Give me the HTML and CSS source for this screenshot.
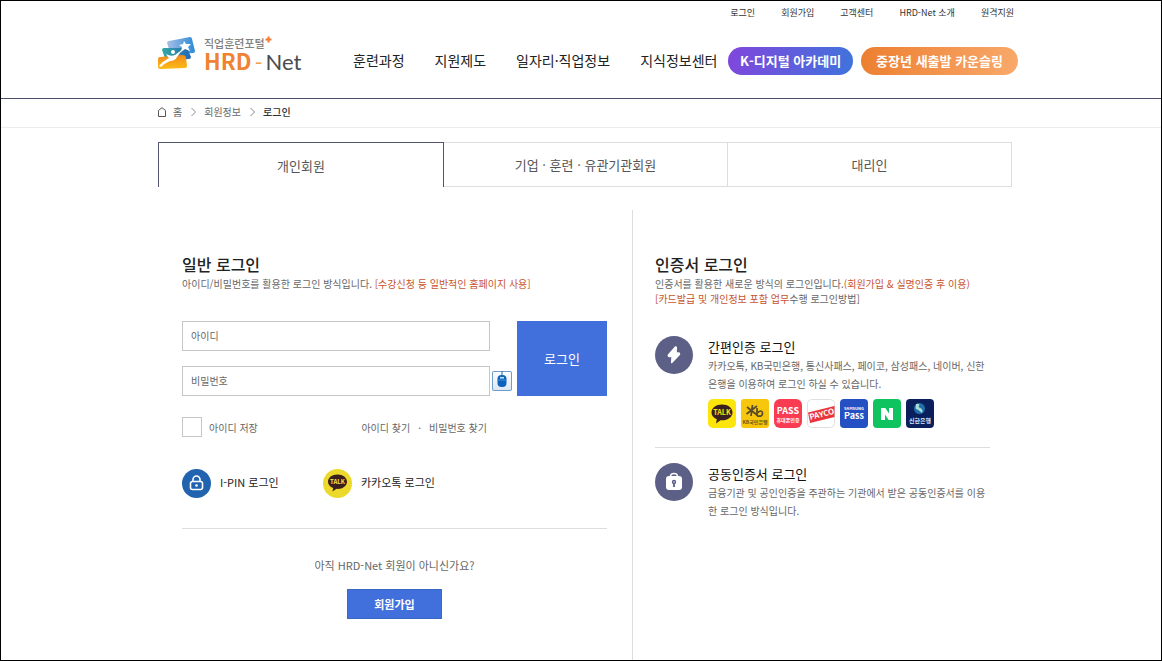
FILE: index.html
```html
<!DOCTYPE html>
<html lang="ko">
<head>
<meta charset="utf-8">
<meta name="viewport" content="width=device-width, initial-scale=1">
<title>로그인 - HRD-Net</title>
<link rel="stylesheet" href="styles.css">
</head>
<body>
<div class="page">
  <header class="header">
    <div class="header-inner">
      <nav class="util" aria-label="유틸리티">
        <a href="#">로그인</a>
        <a href="#">회원가입</a>
        <a href="#">고객센터</a>
        <a href="#">HRD-Net 소개</a>
        <a href="#">원격지원</a>
      </nav>
      <div class="main-row">
        <a class="logo" href="#">
          <svg class="logo-mark" width="40" height="34" viewBox="0 0 40 34" aria-hidden="true">
            <defs>
              <linearGradient id="gBlue" x1="0" y1="0" x2="1" y2="0"><stop offset="0" stop-color="#a9bfe6"/><stop offset="1" stop-color="#2a8bd6"/></linearGradient>
              <linearGradient id="gTeal" x1="0" y1="0" x2="1" y2="0"><stop offset="0" stop-color="#35a9a4"/><stop offset="1" stop-color="#2367b5"/></linearGradient>
              <linearGradient id="gGold" x1="0" y1="0" x2="0" y2="1"><stop offset="0" stop-color="#f08a1d"/><stop offset="1" stop-color="#fdbb14"/></linearGradient>
            </defs>
            <path d="M9 6 Q9 4 11 4 L32 0 Q34 0 34 2 L37 14 Q37 16 35 16 L13 18 Z" fill="url(#gBlue)"/>
            <path d="M4 13 Q4 11 6 11 L28 11 Q30 11 30 13 L33 20 Q33 22 31 22 L8 24 Z" fill="url(#gTeal)"/>
            <path d="M0 22 Q0 20 2 20 L24 18 Q28 18 28 21 L29 29 Q29 31 27 31 L2 32 Q0 32 0 30 Z" fill="url(#gGold)"/>
            <path d="M26 4 L28 7 L33 7 L30 10 L32 14 L27 12 L23 15 L24 10 L21 8 L25 7 Z" fill="#fff"/>
            <circle cx="15" cy="15" r="2" fill="#fff"/>
            <path d="M8 17 Q13 20 17 18 L25 12 L19 20 Q17 24 12 24 Q7 26 3 30 L1 29 Q5 24 11 21 Q9 19 8 17 Z" fill="#fff"/>
          </svg>
          <span class="logo-text">
            <span class="logo-sub">직업훈련포털<svg width="7" height="7" viewBox="0 0 7 7" aria-hidden="true"><path d="M3.5 0.5V6.5M0.5 3.5H6.5" stroke="#ef7c32" stroke-width="2"/></svg></span>
            <span class="logo-name"><b>HRD</b><i>-</i><span>Net</span></span>
          </span>
        </a>
        <nav class="gnb" aria-label="주 메뉴">
          <a href="#">훈련과정</a>
          <a href="#">지원제도</a>
          <a href="#">일자리·직업정보</a>
          <a href="#">지식정보센터</a>
        </nav>
        <div class="pills">
          <a class="pill pill-violet" href="#">K-디지털 아카데미</a>
          <a class="pill pill-orange" href="#">중장년 새출발 카운슬링</a>
        </div>
      </div>
    </div>
  </header>

  <nav class="crumbs" aria-label="현재 위치">
    <div class="wrap crumbs-inner">
      <svg class="home" width="8" height="10" viewBox="0 0 8 10" aria-hidden="true"><path d="M.5 9.500V3.500L4 .7L7.500 3.500V9.500Z" fill="none" stroke="#555"/></svg>
      <a href="#">홈</a>
      <svg class="chev" width="5" height="10" viewBox="0 0 5 10" aria-hidden="true"><path d="M.5 1L4.500 5L.5 9" fill="none" stroke="#888"/></svg>
      <a href="#">회원정보</a>
      <svg class="chev" width="5" height="10" viewBox="0 0 5 10" aria-hidden="true"><path d="M.5 1L4.500 5L.5 9" fill="none" stroke="#888"/></svg>
      <span class="here">로그인</span>
    </div>
  </nav>

  <main class="wrap main">
    <div class="tabs" role="tablist">
      <button class="tab tab-on" type="button" role="tab" aria-selected="true">개인회원</button>
      <button class="tab" type="button" role="tab" aria-selected="false">기업 · 훈련 · 유관기관회원</button>
      <button class="tab" type="button" role="tab" aria-selected="false">대리인</button>
    </div>

    <div class="columns">
      <section class="col col-left">
        <h2 class="title">일반 로그인</h2>
        <p class="lead">아이디/비밀번호를 활용한 로그인 방식입니다. <em>[수강신청 등 일반적인 홈페이지 사용]</em></p>

        <form class="login">
          <input class="field" type="text" placeholder="아이디" aria-label="아이디">
          <input class="field" type="password" placeholder="비밀번호" aria-label="비밀번호">
          <button class="mouse" type="button" aria-label="마우스 입력">
            <svg width="20" height="20" viewBox="0 0 20 20" aria-hidden="true">
              <path d="M10 0V5" stroke="#1a6fb8"/>
              <rect x="5.500" y="4" width="9" height="12" rx="4" fill="#0c63bd"/>
              <path d="M5.500 9H14.500" stroke="#3f8fd6"/>
              <rect x="8" y="6" width="4" height="1.500" fill="#cfe4f7"/>
            </svg>
          </button>
          <button class="submit" type="submit">로그인</button>
          <div class="extras">
            <label class="save"><input type="checkbox">아이디 저장</label>
            <div class="find"><a href="#">아이디 찾기</a><span>·</span><a href="#">비밀번호 찾기</a></div>
          </div>
        </form>

        <div class="social">
          <a href="#">
            <svg width="29" height="29" viewBox="0 0 29 29" aria-hidden="true">
              <circle cx="14.500" cy="14.500" r="14.500" fill="#2163ae"/>
              <rect x="8.500" y="12.500" width="12" height="8" rx="2" fill="none" stroke="#fff" stroke-width="1.600"/>
              <path d="M11 12V10.500A3.500 3.500 0 0 1 18 10.500V12" fill="none" stroke="#fff" stroke-width="1.600"/>
              <circle cx="14.500" cy="16.500" r="1.300" fill="#fff"/>
            </svg>
            I-PIN 로그인
          </a>
          <a href="#">
            <svg width="29" height="29" viewBox="0 0 29 29" aria-hidden="true">
              <circle cx="14.500" cy="14.500" r="14.500" fill="#ecd92b"/>
              <path d="M14.500 5.500C20 5.500 24 8.700 24 12.700S20 19.900 14.500 19.900L13.500 19.800L9.500 22.500L10.200 19C7 17.900 5 15.500 5 12.700C5 8.700 9 5.500 14.500 5.500Z" fill="#3b1f1c"/>
              <text class="glyph" x="14.500" y="15" font-size="6" fill="#f5e14c">TALK</text>
            </svg>
            카카오톡 로그인
          </a>
        </div>

        <div class="join">
          <p>아직 HRD-Net 회원이 아니신가요?</p>
          <a class="join-btn" href="#">회원가입</a>
        </div>
      </section>

      <section class="col">
        <h2 class="title">인증서 로그인</h2>
        <p class="lead">인증서를 활용한 새로운 방식의 로그인입니다.<em>(회원가입 &amp; 실명인증 후 이용)</em><br><em>[카드발급 및 개인정보 포함 업무</em>수행 로그인방법]</p>

        <article class="method">
          <svg width="38" height="38" viewBox="0 0 38 38" aria-hidden="true">
            <circle cx="19" cy="19" r="19" fill="#5c5f86"/>
            <path d="M20.500 11L13.500 19Q13 20.300 14.200 20.500H17.200L16.700 26.500L24.300 18.500Q24.800 17.300 23.700 17.100H21L21.300 11.500Z" fill="#fff" stroke="#fff" stroke-width="1.600" stroke-linejoin="round"/>
          </svg>
          <div>
            <h3><a href="#">간편인증 로그인</a></h3>
            <p>카카오톡, KB국민은행, 통신사패스, 페이코, 삼성패스, 네이버, 신한<br>은행을 이용하여 로그인 하실 수 있습니다.</p>
            <div class="apps">
              <svg width="28" height="29" viewBox="0 0 28 29" role="img" aria-label="카카오톡">
                <rect width="28" height="29" rx="5" fill="#fbe50a"/>
                <path d="M14 5.500C20 5.500 24.500 9 24.500 13.500S20 21.300 14 21.300L12.500 21.200L8 24.500L8.800 20.300C5.500 19 3.500 16.500 3.500 13.500C3.500 9 8 5.500 14 5.500Z" fill="#3a201f"/>
                <text class="glyph" x="14" y="16" font-size="7" fill="#fbe50a">TALK</text>
              </svg>
              <svg width="28" height="29" viewBox="0 0 28 29" role="img" aria-label="KB국민은행">
                <rect width="28" height="29" rx="3" fill="#f6c70d"/>
                <path d="M6 8L16 16M11.500 6L10 17M16 7L5.500 15M16 9L16 17M16 14Q21 10 21.500 14T16 17" fill="none" stroke="#574a2e" stroke-width="1.700"/>
                <text class="glyph" x="14" y="25" font-size="5" fill="#6b5618">KB국민은행</text>
              </svg>
              <svg width="28" height="29" viewBox="0 0 28 29" role="img" aria-label="PASS">
                <rect width="28" height="29" rx="6" fill="#f93c52"/>
                <text class="glyph" x="14" y="15" font-size="9" fill="#fff">PASS</text>
                <text class="glyph" x="14" y="23" font-size="5" fill="#fff">휴대폰인증</text>
              </svg>
              <svg width="28" height="29" viewBox="0 0 28 29" role="img" aria-label="페이코">
                <rect x=".5" y=".5" width="27" height="28" rx="4" fill="#fff" stroke="#e0e0e0"/>
                <path d="M1 13.500L27.500 7V18L3 24Z" fill="#e9343b"/>
                <text class="glyph" x="15" y="18" font-size="8" fill="#fff" transform="rotate(-14 15 16)">PAYCO</text>
              </svg>
              <svg width="28" height="29" viewBox="0 0 28 29" role="img" aria-label="삼성패스">
                <rect width="28" height="29" rx="4" fill="#2450c4"/>
                <text class="glyph" x="14" y="11" font-size="4" fill="#fff">SAMSUNG</text>
                <text class="glyph" x="14" y="20" font-size="9" fill="#fff">Pass</text>
              </svg>
              <svg width="28" height="29" viewBox="0 0 28 29" role="img" aria-label="네이버">
                <rect width="28" height="29" rx="4" fill="#0fc35f"/>
                <path d="M8 9H12.300L16 14.500V9H20V21H15.700L12 15.500V21H8Z" fill="#fff"/>
              </svg>
              <svg width="28" height="29" viewBox="0 0 28 29" role="img" aria-label="신한은행">
                <rect width="28" height="29" rx="4" fill="#0a1f5c"/>
                <circle cx="13.500" cy="9.500" r="5.500" fill="#1f6fa8"/>
                <path d="M10 5Q15 4 12.500 8Q18 10 16 14Q13 11 9.500 9.500Z" fill="#a9dbd6"/>
                <text class="glyph" x="14" y="24" font-size="6" fill="#dfe6ff">신한은행</text>
              </svg>
            </div>
          </div>
        </article>

        <article class="method">
          <svg width="38" height="38" viewBox="0 0 38 38" aria-hidden="true">
            <circle cx="19" cy="19" r="19" fill="#5c5f86"/>
            <path d="M15.500 14V13.500A3.500 3 0 0 1 22.500 13.500V14" fill="none" stroke="#fff" stroke-width="1.600"/>
            <rect x="11" y="13" width="16" height="14" rx="3" fill="#fff"/>
            <circle cx="19" cy="19" r="2.200" fill="#5c5f86"/>
            <path d="M19 20V24" stroke="#5c5f86" stroke-width="1.800"/>
            <circle cx="19" cy="19" r=".7" fill="#fff"/>
          </svg>
          <div>
            <h3><a href="#">공동인증서 로그인</a></h3>
            <p>금융기관 및 공인인증을 주관하는 기관에서 받은 공동인증서를 이용<br>한 로그인 방식입니다.</p>
          </div>
        </article>
      </section>
    </div>
  </main>
</div>
</body>
</html>
```
FILE: styles.css
```css
* {
  box-sizing: border-box;
}

body {
  margin: 0;
  background: #fff;
  color: #666;
  font-family: "Noto Sans CJK KR", "Noto Sans", sans-serif;
  font-size: 10px;
}

h2, h3, p {
  margin: 0;
}

a {
  color: inherit;
  text-decoration: none;
}

button, input {
  font: inherit;
  color: inherit;
}

button {
  cursor: pointer;
}

svg {
  display: block;
  flex: none;
}

.page {
  display: flex;
  flex-direction: column;
  min-height: 100vh;
  border: 1px solid #000;
}

.wrap {
  width: 100%;
  max-width: 862px;
  margin: 0 auto;
  padding-left: 8px;
}

/* Header */

.header {
  border-bottom: 1px solid #4c4f6b;
}

.header-inner {
  max-width: 874px;
  margin: 0 auto;
  padding: 4px 0 0 14px;
}

.util {
  display: flex;
  justify-content: flex-end;
  gap: 26px;
  padding-right: 4px;
  color: #333;
  font-size: 9px;
  line-height: 16px;
}

.main-row {
  display: flex;
  align-items: center;
  height: 77px;
  padding-top: 3px;
}

.logo {
  display: flex;
  gap: 6px;
  width: 195px;
  padding-bottom: 14px;
}

.logo-mark {
  margin-top: 1px;
}

.logo-text {
  display: flex;
  flex-direction: column;
}

.logo-sub {
  display: flex;
  color: #808080;
  font-size: 11px;
  font-weight: 500;
  line-height: 14px;
}

.logo-name {
  display: flex;
  align-items: baseline;
  color: #4b4b4f;
  font-family: Lato, sans-serif;
  font-size: 22px;
  line-height: 20px;
}

.logo-name b {
  color: #ef8233;
  font-family: "Noto Sans CJK KR", sans-serif;
}

.logo-name i {
  padding: 0 3px;
  color: #efa14c;
  font-style: normal;
}

.gnb {
  display: flex;
  gap: 30px;
  padding-bottom: 2px;
  color: #222;
  font-size: 14px;
  white-space: nowrap;
}

.pills {
  display: flex;
  gap: 8px;
  margin-left: auto;
}

.pill {
  border-radius: 14px;
  color: #fff;
  font-size: 13px;
  font-weight: 700;
  line-height: 28px;
  text-align: center;
  white-space: nowrap;
}

.pill-violet {
  padding: 0 12px;
  background: linear-gradient(100deg, #8146dc, #3f74dc);
}

.pill-orange {
  padding: 0 15px;
  background: linear-gradient(100deg, #ec7f30, #f9a96b);
}

/* Breadcrumb */

.crumbs {
  border-bottom: 1px solid #ececec;
}

.crumbs-inner {
  display: flex;
  align-items: center;
  height: 28px;
  padding-bottom: 3px;
}

.home {
  margin-right: 7px;
}

.chev {
  margin: 0 8px 0 9px;
}

.here {
  color: #333;
  font-weight: 500;
}

/* Tabs */

.main {
  display: flex;
  flex: 1;
  flex-direction: column;
  padding-top: 14px;
}

.tabs {
  display: grid;
  grid-template-columns: 286fr 284fr 284fr;
}

.tab {
  height: 45px;
  padding: 0;
  border: 1px solid #ddd;
  border-left: 0;
  background: #fff;
  color: #555;
  font-size: 13px;
}

.tab-on {
  border: 1px solid #54566f;
  border-bottom: 0;
}

/* Columns */

.columns {
  display: grid;
  flex: 1;
  grid-template-columns: 475fr 379fr;
  margin-top: 23px;
}

.col {
  padding: 42px 22px 20px;
}

.col-left {
  padding: 42px 25px 20px 24px;
  border-right: 1px solid #ddd;
}

.title {
  color: #222;
  font-size: 16px;
  font-weight: 500;
  line-height: 24px;
}

.lead {
  line-height: 15px;
}

.lead em {
  color: #c8532d;
  font-style: normal;
}

/* Login form */

.login {
  display: grid;
  grid-template-columns: 1fr 20px 93px;
  grid-template-rows: 30px 30px auto;
  gap: 15px 2px;
  margin-top: 30px;
}

.field {
  grid-column: 1;
  width: 100%;
  height: 30px;
  padding: 0 8px 2px;
  border: 1px solid #c6c6c6;
  background: #fff;
  outline: 0;
}

.field::placeholder {
  color: #666;
  opacity: 1;
}

.mouse {
  grid-row: 2;
  grid-column: 2;
  align-self: center;
  height: 20px;
  padding: 0;
  border: 0;
  border-radius: 2px;
  background: linear-gradient(#fff, #dbe6f3);
  box-shadow: inset 0 0 0 1px #6f9cc8;
}

.submit {
  grid-row: 1 / 3;
  grid-column: 3;
  margin-left: 3px;
  border: 0;
  background: #4170dd;
  color: #fff;
  font-size: 13px;
}

.extras {
  display: flex;
  grid-column: 1;
  align-items: center;
  justify-content: space-between;
  margin-top: 6px;
  padding-right: 3px;
}

.save {
  display: flex;
  align-items: center;
  gap: 7px;
}

.save input {
  width: 20px;
  height: 20px;
  margin: 0;
  border: 1px solid #c6c6c6;
  appearance: none;
}

.save input:checked {
  background: #4170dd;
}

.find {
  display: flex;
  gap: 8px;
}

.social {
  display: grid;
  grid-template-columns: 141px 1fr;
  margin-top: 32px;
  padding-bottom: 30px;
  border-bottom: 1px solid #ddd;
  color: #222;
  font-size: 11px;
  line-height: 27px;
}

.social a {
  display: flex;
  gap: 9px;
}

.join {
  padding-top: 27px;
  font-size: 11px;
  line-height: 18px;
  text-align: center;
}

.join-btn {
  display: inline-block;
  width: 95px;
  margin-top: 15px;
  border: 1px solid #3a69c4;
  background: #4170dd;
  color: #fff;
  font-size: 11px;
  font-weight: 700;
  line-height: 28px;
}

/* Certificate login */

.method {
  display: flex;
  gap: 15px;
  padding-top: 15px;
}

.lead + .method {
  padding: 30px 0 19px;
  border-bottom: 1px solid #ddd;
}

.method h3 {
  color: #111;
  font-size: 13px;
  font-weight: 400;
  line-height: 21px;
}

.method p {
  line-height: 18px;
}

.apps {
  display: flex;
  gap: 5px;
  margin-top: 6px;
}

.glyph {
  font-family: "Noto Sans CJK KR", sans-serif;
  font-weight: 700;
  text-anchor: middle;
}
```
